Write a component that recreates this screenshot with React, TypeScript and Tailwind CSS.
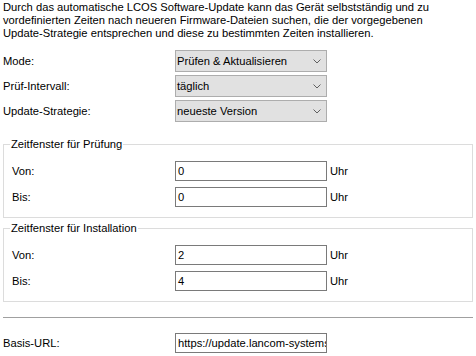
import React from "react";

// DATA
const selects = [
  { label: "Mode:", value: "Prüfen & Aktualisieren" },
  { label: "Prüf-Intervall:", value: "täglich" },
  { label: "Update-Strategie:", value: "neueste Version" },
];

const groups = [
  { title: "Zeitfenster für Prüfung", von: "0", bis: "0" },
  { title: "Zeitfenster für Installation", von: "2", bis: "4" },
];

// COMPONENTS
const Chevron = () => (
  <svg width="8" height="5" viewBox="0 0 8 5" className="shrink-0">
    <path d="M0.5 0.5 L4 4 L7.5 0.5" fill="none" stroke="#606060" strokeWidth="1" />
  </svg>
);

const Select: React.FC<{ value: string }> = ({ value }) => (
  <div className="flex h-[22px] w-[152px] items-center justify-between border border-[#adadad] bg-[#e1e1e1] pl-[1px] pr-[5px]">
    <span className="whitespace-nowrap">{value}</span>
    <Chevron />
  </div>
);

const TextBox: React.FC<{ value: string }> = ({ value }) => (
  <div className="flex h-[20px] w-[152px] items-center overflow-hidden whitespace-nowrap border border-[#7a7a7a] bg-white pl-[2px]">
    {value}
  </div>
);

const TimeGroup: React.FC<{ title: string; von: string; bis: string }> = ({
  title,
  von,
  bis,
}) => (
  <fieldset className="w-[470px] border border-[#dcdcdc] pb-[10px] pl-[8px] pt-[10px]">
    <legend className="ml-[-2px] px-[1px] leading-[13px]">{title}</legend>
    <div className="grid grid-cols-[163px_152px_auto] items-center gap-y-[6px]">
      <span>Von:</span>
      <TextBox value={von} />
      <span className="ml-[3px]">Uhr</span>
      <span>Bis:</span>
      <TextBox value={bis} />
      <span className="ml-[3px]">Uhr</span>
    </div>
  </fieldset>
);

export default function App() {
  return (
    <div className="h-[356px] w-[476px] overflow-hidden bg-white px-[3px] font-['Segoe_UI','Liberation_Sans',sans-serif] text-[11.2px] leading-[14px] text-black">
      <p className="whitespace-nowrap pt-[1px] leading-[13px]">
        Durch das automatische LCOS Software-Update kann das Gerät selbstständig und zu
        <br />
        vordefinierten Zeiten nach neueren Firmware-Dateien suchen, die der vorgegebenen
        <br />
        Update-Strategie entsprechen und diese zu bestimmten Zeiten installieren.
      </p>

      <div className="mt-[10px] grid grid-cols-[172px_152px] items-center gap-y-[3px]">
        {selects.map((s) => (
          <React.Fragment key={s.label}>
            <span>{s.label}</span>
            <Select value={s.value} />
          </React.Fragment>
        ))}
      </div>

      <div className="mt-[16px]">
        <TimeGroup {...groups[0]} />
      </div>
      <div className="mt-[4px]">
        <TimeGroup {...groups[1]} />
      </div>

      <div className="mt-[15px] h-px w-[470px] bg-[#a0a0a0]" />

      <div className="mt-[15px] grid grid-cols-[172px_152px] items-center">
        <span>Basis-URL:</span>
        <TextBox value="https://update.lancom-systems.de" />
      </div>
    </div>
  );
}
